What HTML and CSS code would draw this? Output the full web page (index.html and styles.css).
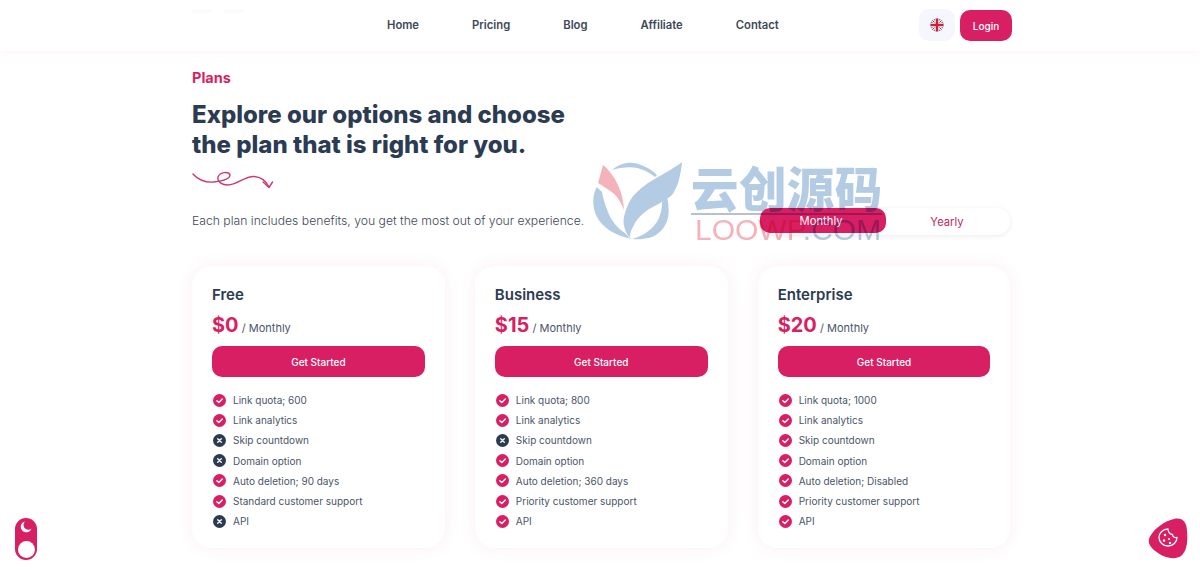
FILE: index.html
```html
<!DOCTYPE html>
<html lang="en">
<head>
<meta charset="utf-8">
<title>Plans</title>
<link rel="stylesheet" href="styles.css">
</head>
<body>
<header class="topbar">
  <div class="logo-ghost"><i></i><i></i></div>
  <nav class="nav">
    <a>Home</a><a>Pricing</a><a>Blog</a><a>Affiliate</a><a>Contact</a>
  </nav>
  <div class="actions">
    <button class="lang" aria-label="Language">
      <svg width="14" height="14" viewBox="0 0 14 14">
        <defs><clipPath id="fc"><circle cx="7" cy="7" r="6.5"/></clipPath></defs>
        <g clip-path="url(#fc)">
          <rect width="14" height="14" fill="#3d4a78"/>
          <path d="M0 0L14 14M14 0L0 14" stroke="#fff" stroke-width="3"/>
          <path d="M0 0L14 14M14 0L0 14" stroke="#c8203f" stroke-width="1"/>
          <path d="M7 0V14M0 7H14" stroke="#fff" stroke-width="4.5"/>
          <path d="M7 0V14M0 7H14" stroke="#c8203f" stroke-width="2.6"/>
        </g>
      </svg>
    </button>
    <button class="login">Login</button>
  </div>
</header>

<main class="page">
  <p class="eyebrow">Plans</p>
  <h1 class="title">Explore our options and choose<br>the plan that is right for you.</h1>
  <svg class="squiggle" width="82" height="20" viewBox="0 0 82 20" fill="none" stroke="#cc3a72" stroke-width="1.4" stroke-linecap="round" stroke-linejoin="round">
    <path d="M1 3C5 8 13 12 22 11C30 10 38 8 38 4C37 0.500 28 0.500 26 6C25 11 30 14 36 14C45 14 53 5 62 5.500C70 6 74 10 77 16"/>
    <path d="M71 11L77 16.500L80.500 11"/>
  </svg>
  <div class="intro">
    <p class="lead">Each plan includes benefits, you get the most out of your experience.</p>
    <div class="switch">
      <button class="switch-on">Monthly</button>
      <button class="switch-off">Yearly</button>
    </div>
  </div>

  <section class="cards">
    <article class="card">
      <h2>Free</h2>
      <p class="price"><b>$0</b> / Monthly</p>
      <button class="cta">Get Started</button>
      <ul class="features">
        <li class="yes">Link quota; 600</li>
        <li class="yes">Link analytics</li>
        <li class="no">Skip countdown</li>
        <li class="no">Domain option</li>
        <li class="yes">Auto deletion; 90 days</li>
        <li class="yes">Standard customer support</li>
        <li class="no">API</li>
      </ul>
    </article>
    <article class="card">
      <h2>Business</h2>
      <p class="price"><b>$15</b> / Monthly</p>
      <button class="cta">Get Started</button>
      <ul class="features">
        <li class="yes">Link quota; 800</li>
        <li class="yes">Link analytics</li>
        <li class="no">Skip countdown</li>
        <li class="yes">Domain option</li>
        <li class="yes">Auto deletion; 360 days</li>
        <li class="yes">Priority customer support</li>
        <li class="yes">API</li>
      </ul>
    </article>
    <article class="card">
      <h2>Enterprise</h2>
      <p class="price"><b>$20</b> / Monthly</p>
      <button class="cta">Get Started</button>
      <ul class="features">
        <li class="yes">Link quota; 1000</li>
        <li class="yes">Link analytics</li>
        <li class="yes">Skip countdown</li>
        <li class="yes">Domain option</li>
        <li class="yes">Auto deletion; Disabled</li>
        <li class="yes">Priority customer support</li>
        <li class="yes">API</li>
      </ul>
    </article>
  </section>
</main>

<div class="theme-toggle">
  <svg width="12" height="12" viewBox="0 0 12 12"><path fill="#fff" d="M5 0.500A5.500 5.500 0 1 0 11.500 7.500A4.700 4.700 0 0 1 5 0.500Z"/></svg>
  <span class="knob"></span>
</div>

<div class="cookie">
  <svg width="40" height="41" viewBox="0 0 40 41">
    <path fill="#d81f63" d="M3 17C7 10 17 3 26 1C34 -1 39 4 39 13C40 23 39 33 33 38C27 42 17 40 10 35C2 30 -2 24 3 17Z"/>
    <g fill="none" stroke="#fff" stroke-width="1.300" stroke-linejoin="round">
      <path d="M20 11C15 11 11 15 11 19.500C11 24 15 28 20 28C25 28 29 24 29 19.500C26.500 20 24.500 18.500 24.500 16.500C22 16.500 20 14 20 11Z"/>
    </g>
    <g fill="#fff"><circle cx="17" cy="17" r="1.200"/><circle cx="16" cy="22.500" r="1.200"/><circle cx="21" cy="21" r="1"/><circle cx="22" cy="25" r="1.200"/></g>
  </svg>
</div>

<div class="watermark" aria-hidden="true">
  <svg class="wm-logo" width="90" height="78" viewBox="0 0 90 78">
    <path fill="#f4b3bb" d="M10 3C20 11 30 27 31 48C28 40 24 34 20 31C15 27 10 24 5 21Z"/>
    <g fill="#b3cbe3">
      <path d="M4 25C-1 32 -1 46 4 55C9 65 22 74 39 77C34 74 33 72 32 71C24 66 18 58 15 50C12 43 10 36 9 30Z"/>
      <path d="M19 8C26 2 34 0 40 1C49 2 58 7 64 13L62 15C56 10 48 6 40 5.500C33 5 26 6 19 8Z"/>
      <path d="M89 0C80 7 66 14 55 21C45 28 38 35 35 43C31 52 29 60 32 67C33 71 35 74 37 75C37 71 38 68 40 65C43 58 47 54 52 50C60 44 71 40 79 33C85 25 88 12 89 0Z"/>
      <path d="M74 35C76 42 76 50 75 56C72 68 62 76 52 76.500C47 77.500 43 77.500 39 77C46 75 54 71 59 66C63 62 66 57 67 53C69 47 69 43 69 40Z"/>
    </g>
  </svg>
  <div class="wm-text">
    <div class="wm-cn">云创源码</div>
    <div class="wm-en"><span class="wm-pink">LOOWP</span>.COM</div>
  </div>
</div>
</body>
</html>
```

FILE: styles.css
```css
* { box-sizing: border-box; }
html, body { margin: 0; padding: 0; }
body {
  height: 573px;
  overflow: hidden;
  background: #fff;
  color: #2b3b52;
  font-family: Inter, "Noto Sans CJK SC", sans-serif;
}
button { font-family: inherit; border: 0; cursor: pointer; }
p, h1, h2, ul { margin: 0; padding: 0; }

.topbar {
  display: flex;
  align-items: center;
  height: 51px;
  padding: 0 188px 1px 192px;
  background: #fff;
  box-shadow: 0 2px 8px rgba(216, 31, 99, .04);
}
.logo-ghost { display: flex; gap: 12px; width: 195px; margin-bottom: 28px; }
.logo-ghost i { width: 20px; height: 4px; background: #fcfcfc; }
.nav { display: flex; gap: 53px; font-size: 11.250px; font-weight: 600; color: #3d4859; }
.actions { display: flex; align-items: flex-end; gap: 5px; margin-left: auto; }
.lang {
  display: flex; align-items: center; justify-content: center;
  width: 36px; height: 32px; background: #f6f7fc; border-radius: 10px;
}
.login {
  width: 52px; height: 31px; background: #d81f63; color: #fff;
  font-size: 10px; font-weight: 500; border-radius: 10px;
}

.page { padding: 18px 189.500px 0 192px; }
.eyebrow { font-size: 14.500px; line-height: 18px; font-weight: 700; color: #d81f63; }
.title { margin-top: 13px; font-size: 24px; line-height: 30px; font-weight: 800; color: #2b3b52; }
.squiggle { display: block; margin-top: 11px; }
.intro { display: flex; align-items: center; justify-content: space-between; margin-top: 17px; }
.lead { margin-bottom: 2px; font-size: 12.200px; font-weight: 300; color: #3d4859; }
.switch {
  display: flex; width: 250px; height: 27px; margin-right: .500px; border-radius: 13px; background: #fff;
  box-shadow: 0 1px 4px rgba(40, 50, 70, .1);
}
.switch button { font-size: 11.250px; background: transparent; }
.switch .switch-on { width: 126px; height: 25px; padding: 0 9px 0 5px; background: #d81f63; color: #fff; border-radius: 10px; }
.switch .switch-off { flex: 1; padding: 0 8px 0 6px; color: #c02a63; }

.cards { display: flex; gap: 30px; margin-top: 31px; }
.card {
  flex: 1; height: 282px; padding: 20px 20px 0;
  background: #fff; border-radius: 20px;
  box-shadow: 0 0 18px rgba(216, 31, 99, .07);
}
.card h2 { font-size: 15px; line-height: 18px; font-weight: 600; color: #2b3b52; }
.price { margin-top: 7px; font-size: 11px; line-height: 28px; color: #4a5568; }
.price b { font-size: 20px; font-weight: 700; color: #d81f63; }
.cta {
  display: block; width: 100%; height: 31px; margin-top: 4px;
  background: #d81f63; color: #fff; font-size: 10px; font-weight: 500; border-radius: 10px;
}
.features { margin-top: 13px; list-style: none; }
.features li {
  display: flex; align-items: center; gap: 7px;
  height: 20.200px; font-size: 10px; color: #4a5568;
}
.features li::before {
  flex: none; content: ""; width: 13px; height: 13px; margin-left: 1px;
  background: no-repeat left center / 13px 13px;
}
.features .yes::before {
  background-image: url("data:image/svg+xml,%3Csvg xmlns='http://www.w3.org/2000/svg' viewBox='0 0 13 13'%3E%3Ccircle cx='6.5' cy='6.500' r='6.500' fill='%23d81f63'/%3E%3Cpath d='M3.800 6.700l2 1.900 3.500-3.700' fill='none' stroke='%23fff' stroke-width='1.400' stroke-linecap='round' stroke-linejoin='round'/%3E%3C/svg%3E");
}
.features .no::before {
  background-image: url("data:image/svg+xml,%3Csvg xmlns='http://www.w3.org/2000/svg' viewBox='0 0 13 13'%3E%3Ccircle cx='6.5' cy='6.500' r='6.500' fill='%232b3b52'/%3E%3Cpath d='M4.700 4.700l3.600 3.600M8.300 4.700l-3.600 3.600' fill='none' stroke='%23fff' stroke-width='1.300' stroke-linecap='round'/%3E%3C/svg%3E");
}

.theme-toggle {
  position: fixed; left: 15px; top: 518px;
  display: flex; flex-direction: column; align-items: center; justify-content: space-between;
  width: 22px; height: 42px; padding: 3px 2.500px 2.500px;
  background: #d81f63; border-radius: 11px;
}
.knob { width: 17px; height: 17px; background: #fff; border-radius: 50%; }
.cookie { position: fixed; left: 1148px; top: 518px; line-height: 0; }

.watermark {
  position: fixed; left: 593px; top: 162px;
  display: flex; gap: 9px;
  mix-blend-mode: multiply;
  pointer-events: none;
}
.wm-logo { display: block; }
.wm-text { display: flex; flex-direction: column; width: 190px; }
.wm-cn {
  height: 53px; margin-left: -1px;
  border-bottom: 2px solid #b9bfd2;
  font-size: 47.500px; line-height: 55px; font-weight: 900; letter-spacing: .4px;
  color: #b3cbe3; white-space: nowrap;
}
.wm-en {
  padding-left: 3px;
  font-family: "Liberation Sans", sans-serif;
  font-size: 30px; line-height: 29px; color: #b3cbe3; white-space: nowrap;
}
.wm-pink { color: #f4b3bb; }
```
